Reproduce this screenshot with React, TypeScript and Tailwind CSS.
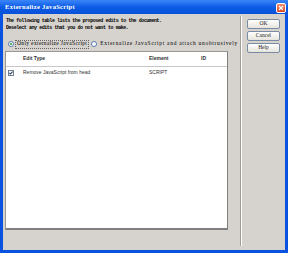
import React from 'react';

const Btn: React.FC<{ label: string }> = ({ label }) => (
  <button className="h-[10px] w-[33px] rounded-[2px] border border-[#7a8ba6] bg-gradient-to-b from-[#ffffff] to-[#e6e4dc] text-[5.5px] leading-none text-[#222] [font-family:'Liberation_Serif',serif]">
    {label}
  </button>
);

export default function App() {
  return (
    <div className="w-[288px] h-[253px] flex flex-col bg-[#0a52e0] [font-family:'Liberation_Sans',sans-serif]">
      {/* Title bar */}
      <div className="h-[14px] flex items-center justify-between pl-[5px] pr-[2px] bg-gradient-to-b from-[#3a86f8] via-[#0b5ce6] to-[#0851d8]">
        <span className="text-[6.5px] font-bold text-white tracking-[0.3px] [font-family:'Liberation_Serif',serif]">
          Externalize JavaScript
        </span>
        <div className="mt-[1px] w-[10px] h-[10px] rounded-[2px] border border-white bg-gradient-to-b from-[#f08c6c] to-[#d8401c] flex items-center justify-center">
          <svg width="6" height="6" viewBox="0 0 6 6">
            <path d="M1 1L5 5M5 1L1 5" stroke="white" strokeWidth="1.3" />
          </svg>
        </div>
      </div>

      {/* Body */}
      <div className="flex-1 flex mx-[3px] mb-[3px] bg-[#d6d3ce]">
        <div className="w-[237px] flex flex-col pl-[2px] pt-[4px]">
          <div className="pl-[1px] text-[5px] leading-[6.5px] font-bold text-black [font-family:'Liberation_Mono',monospace] tracking-[-0.45px]">
            <div>The following table lists the proposed edits to the document.</div>
            <div>Deselect any edits that you do not want to make.</div>
          </div>

          <div className="flex items-center mt-[9px] h-[8px] text-[5.5px] leading-none text-black whitespace-nowrap [font-family:'Liberation_Serif',serif]">
            <span className="shrink-0 ml-[3px] w-[6px] h-[6px] rounded-full border border-[#5a7ab0] bg-white flex items-center justify-center">
              <span className="w-[2px] h-[2px] rounded-full bg-[#28a028]" />
            </span>
            <span className="shrink-0 ml-[2px] h-[7px] flex items-center px-[1px] outline outline-1 outline-dotted outline-[#666] tracking-[0.35px]">
              Only externalize JavaScript
            </span>
            <span className="shrink-0 ml-[3px] w-[6px] h-[6px] rounded-full border border-[#5a7ab0] bg-white" />
            <span className="shrink-0 ml-[3px] tracking-[0.7px]">Externalize JavaScript and attach unobtrusively</span>
          </div>

          {/* Table */}
          <div className="mt-[3px] w-[223px] h-[179px] bg-white border-t border-l border-[#9a9893] border-r-[1px] border-r-[#808080] border-b-[2px] border-b-[#808080] text-[5px] text-[#333]">
            <div className="h-[15px] flex items-center border-b border-[#c8c8c8] font-bold">
              <span className="ml-[17px] w-[126px]">Edit Type</span>
              <span className="w-[52px]">Element</span>
              <span>ID</span>
            </div>
            <div className="h-[12px] flex items-center">
              <span className="ml-[2px] w-[6px] h-[6px] border border-[#6f7f95] bg-white flex items-center justify-center">
                <svg width="4" height="4" viewBox="0 0 4 4">
                  <path d="M0.4 1.8L1.5 3L3.6 0.6" stroke="#2a3a50" strokeWidth="1.1" fill="none" />
                </svg>
              </span>
              <span className="ml-[9px] w-[126px]">Remove JavaScript from head</span>
              <span>SCRIPT</span>
            </div>
          </div>
        </div>

        {/* Separator */}
        <div className="mt-[2px] mb-[4px] w-[2px] border-l border-[#a09d96] bg-white" />

        {/* Buttons */}
        <div className="flex flex-col gap-[2px] pl-[5px] pt-[5px]">
          <Btn label="OK" />
          <Btn label="Cancel" />
          <Btn label="Help" />
        </div>
      </div>
    </div>
  );
}
